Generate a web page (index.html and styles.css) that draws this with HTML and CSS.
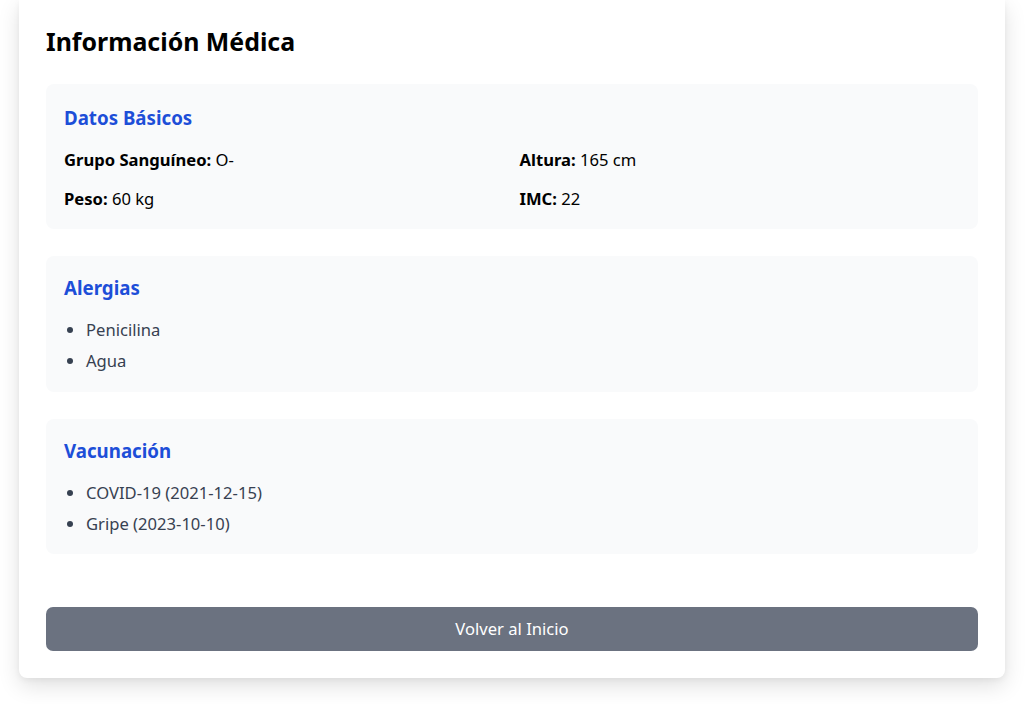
FILE: index.html
```html
<!DOCTYPE html>
<html lang="es">
<head>
<meta charset="utf-8">
<title>Información Médica</title>
<link rel="stylesheet" href="styles.css">
</head>
<body>
<main class="card">
  <h1 class="title">Información Médica</h1>
  <div class="sections">
    <section class="box box-basic">
      <h2 class="box-title">Datos Básicos</h2>
      <div class="grid">
        <p><strong>Grupo Sanguíneo:</strong> O-</p>
        <p><strong>Altura:</strong> 165 cm</p>
        <p><strong>Peso:</strong> 60 kg</p>
        <p><strong>IMC:</strong> 22</p>
      </div>
    </section>
    <section class="box box-list">
      <h2 class="box-title">Alergias</h2>
      <ul class="list">
        <li>Penicilina</li>
        <li>Agua</li>
      </ul>
    </section>
    <section class="box box-list">
      <h2 class="box-title">Vacunación</h2>
      <ul class="list">
        <li>COVID-19 (2021-12-15)</li>
        <li>Gripe (2023-10-10)</li>
      </ul>
    </section>
  </div>
  <button class="back-btn" type="button">Volver al Inicio</button>
</main>
</body>
</html>
```

FILE: styles.css
```css
* { box-sizing: border-box; }
html, body { margin: 0; padding: 0; background: #ffffff; }
body {
  font-family: "Noto Sans", "Open Sans", sans-serif;
  color: #000;
  font-size: 16.6px;
  line-height: 24px;
  padding-bottom: 27px;
}
.card {
  margin-left: 19px;
  width: 986px;
  background: #fff;
  border-radius: 0 0 8px 8px;
  box-shadow: 0 8px 22px rgba(0,0,0,0.12), 0 2px 6px rgba(0,0,0,0.05);
  padding: 25px 27px 27px;
  display: flex;
  flex-direction: column;
}
.title {
  margin: 0 0 27px;
  font-size: 24.9px;
  line-height: 32px;
  font-weight: 700;
  color: #000;
}
.sections {
  display: flex;
  flex-direction: column;
  gap: 27px;
}
.box {
  background: #f9fafb;
  border-radius: 8px;
  padding: 18px;
}
.box-basic { padding-top: 20px; }
.box-list { padding-bottom: 18.5px; }
.box-title {
  margin: 0 0 16px;
  font-size: 18.7px;
  line-height: 28px;
  font-weight: 700;
  color: #1d4ed8;
}
.grid {
  display: grid;
  grid-template-columns: 1fr 1fr;
  column-gap: 15px;
  row-gap: 15px;
}
.grid p { margin: 0; }
.grid strong { font-weight: 700; }
.list {
  margin: 0;
  padding-left: 22px;
  list-style: disc;
  color: #374151;
  display: flex;
  flex-direction: column;
  gap: 7px;
}
.list li::marker { color: #374151; }
.back-btn {
  margin-top: 52.5px;
  height: 44px;
  border: 0;
  border-radius: 7px;
  background: #6b7280;
  color: #fff;
  font-family: inherit;
  font-size: 16.6px;
  line-height: 24px;
  padding: 10px;
  cursor: pointer;
}
```
